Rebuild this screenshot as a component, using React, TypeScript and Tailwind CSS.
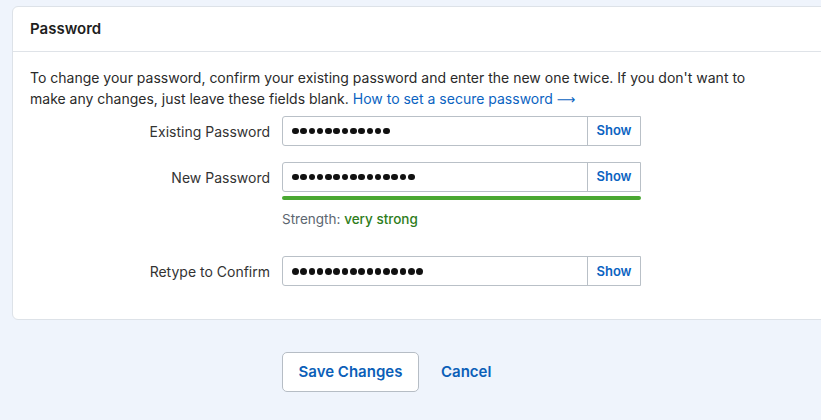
import { useState } from "react";

const FIELDS = [
  { id: "existing", label: "Existing Password", value: "abcdefghijkl" },
  { id: "new", label: "New Password", value: "abcdefghijklmno" },
  { id: "confirm", label: "Retype to Confirm", value: "abcdefghijklmnop" },
];

function PasswordRow({ label, value }: { label: string; value: string }) {
  const [shown, setShown] = useState(false);
  return (
    <div className="flex items-center">
      <label className="w-[252px] shrink-0 pr-[12px] text-right text-[14px] text-[#333]">{label}</label>
      <div className="flex h-[30px] w-[359px] rounded-l-[3px] border border-[#b9c0c7] bg-white">
        <div className="flex min-w-0 flex-1 items-center px-[9px]">
          {shown ? (
            <span className="text-[14px] text-[#111]">{value}</span>
          ) : (
            <div className="flex items-center gap-[1.7px]">
              {value.split("").map((_, i) => (
                <span key={i} className="block h-[6.6px] w-[6.6px] rounded-full bg-[#111]" />
              ))}
            </div>
          )}
        </div>
        <button
          onClick={() => setShown(!shown)}
          className="w-[53px] shrink-0 border-l border-[#b9c0c7] text-[13px] font-semibold text-[#0b63c1]"
        >
          Show
        </button>
      </div>
    </div>
  );
}

export default function App() {
  return (
    <div className="h-[420px] w-[821px] overflow-hidden bg-[#eff4fc] pt-[6px] font-['Inter',sans-serif]">
      <div className="ml-[12px] w-[830px] rounded-[6px] border border-[#dde2e8] bg-white">
        <div className="flex h-[45px] items-center border-b border-[#dfe3e8] px-[17px]">
          <h2 className="text-[15px] font-semibold text-[#1d1d1d]">Password</h2>
        </div>
        <div className="pb-[33px] pl-[17px] pt-[15px]">
          <p className="w-[740px] text-[14px] leading-[21px] text-[#2a2a2a]">
            To change your password, confirm your existing password and enter the new one twice. If you don't want to
            make any changes, just leave these fields blank.{" "}
            <a href="#" className="text-[#0b63c1]">
              How to set a secure password <span className="font-['DejaVu_Sans',sans-serif] text-[13px]">⟶</span>
            </a>
          </p>
          <div className="mt-[6px]">
            <PasswordRow label={FIELDS[0].label} value={FIELDS[0].value} />
          </div>
          <div className="mt-[16px]">
            <PasswordRow label={FIELDS[1].label} value={FIELDS[1].value} />
          </div>
          <div className="ml-[252px] mt-[4px] h-[4px] w-[359px] rounded-full bg-[#4aa832]" />
          <div className="ml-[252px] mt-[9px] text-[13.5px] text-[#5c6670]">
            Strength: <span className="font-medium text-[#2e7d1b]">very strong</span>
          </div>
          <div className="mt-[27px]">
            <PasswordRow label={FIELDS[2].label} value={FIELDS[2].value} />
          </div>
        </div>
      </div>
      <div className="ml-[282px] mt-[32px] flex items-center gap-[22px]">
        <button className="h-[40px] w-[137px] rounded-[5px] border border-[#b6bdc5] bg-white text-[15px] font-semibold text-[#0b5fb8]">
          Save Changes
        </button>
        <button className="text-[15px] font-semibold text-[#0b5fb8]">Cancel</button>
      </div>
    </div>
  );
}
